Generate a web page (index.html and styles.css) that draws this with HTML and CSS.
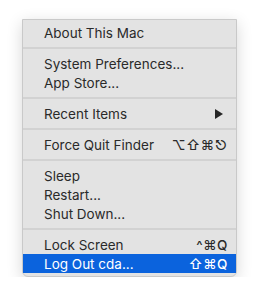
FILE: index.html
```html
<!DOCTYPE html>
<html lang="en">

<head>
    <meta charset="UTF-8" />
    <title>Apple Menu</title>
    <link rel="stylesheet" href="styles.css">
</head>

<body>
    <div class="menu">
        <div class="item">About This Mac</div>
        <div class="sep"></div>
        <div class="item">System Preferences...</div>
        <div class="item">App Store...</div>
        <div class="sep"></div>
        <div class="item">Recent Items <span class="arrow"></span></div>
        <div class="sep"></div>
        <div class="item">Force Quit Finder <span class="keys">⌥⇧⌘⎋</span></div>
        <div class="sep"></div>
        <div class="item">Sleep</div>
        <div class="item">Restart...</div>
        <div class="item">Shut Down...</div>
        <div class="sep"></div>
        <div class="item">Lock Screen <span class="keys">^⌘Q</span></div>
        <div class="item active">Log Out cda... <span class="keys">⇧⌘Q</span></div>
    </div>
</body>

</html>
```

FILE: styles.css
```css
* {
    box-sizing: border-box;
}

body {
    margin: 0;
    background: #fff;
    font-family: Inter, "Noto Sans", sans-serif;
}

.menu {
    margin: 19px 0 0 22px;
    width: 215px;
    padding: 3px 0;
    background: #e3e3e3;
    border: 1px solid #c9c9c9;
    border-radius: 0 0 6px 6px;
    box-shadow: 0 4px 16px rgba(0, 0, 0, 0.16);
}

.item {
    height: 19px;
    padding: 0 8px 0 21px;
    display: flex;
    align-items: center;
    justify-content: space-between;
    font-size: 13.5px;
    color: #2a2a2a;
}

.item.active {
    background: #0b63dd;
    color: #fff;
}

.sep {
    height: 12px;
    display: flex;
    align-items: center;
}

.sep::after {
    content: "";
    flex: 1;
    height: 2px;
    background: #d2d2d2;
}

.arrow {
    width: 0;
    height: 0;
    margin-right: 5px;
    border-top: 5px solid transparent;
    border-bottom: 5px solid transparent;
    border-left: 8px solid #262626;
}

.keys {
    font-family: Inter, "DejaVu Sans", sans-serif;
    font-size: 13.5px;
    font-weight: 500;
    letter-spacing: 0.5px;
}
```
